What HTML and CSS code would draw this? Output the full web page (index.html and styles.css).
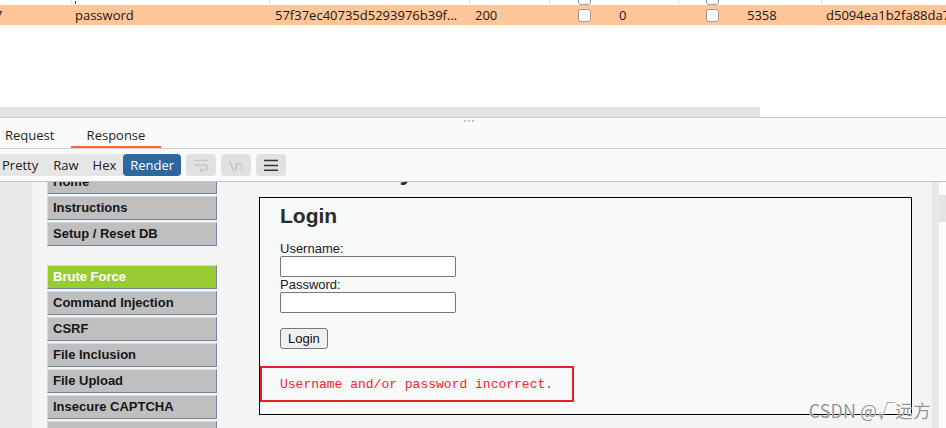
FILE: index.html
```html
<!DOCTYPE html>
<html lang="en">
<head>
<meta charset="utf-8">
<title>Intruder result</title>
<link rel="stylesheet" href="styles.css">
</head>
<body>
<div class="results">
  <div class="row row-top">
    <div class="cell sep"></div>
    <div class="cell sep"><span class="caret"></span></div>
    <div class="cell sep"></div>
    <div class="cell sep"></div>
    <div class="cell chk"><span class="box"></span></div>
    <div class="cell sep"></div>
    <div class="cell chk"><span class="box"></span></div>
    <div class="cell sep"></div>
    <div class="cell"></div>
  </div>
  <div class="row row-sel">
    <div class="cell num">7</div>
    <div class="cell p3">password</div>
    <div class="cell p5">57f37ec40735d5293976b39f...</div>
    <div class="cell p5">200</div>
    <div class="cell chk"><span class="box"></span></div>
    <div class="cell p1">0</div>
    <div class="cell chk"><span class="box"></span></div>
    <div class="cell p2">5358</div>
    <div class="cell p4">d5094ea1b2fa88da75b2b3c4</div>
  </div>
</div>

<div class="gap"></div>
<div class="hbar-wrap"><div class="hbar"></div></div>

<div class="tabs">
  <div class="tab tab-req">Request</div>
  <div class="tab tab-res">Response</div>
  <div class="grip"><i></i><i></i><i></i></div>
</div>

<div class="toolbar">
  <div class="seg">
    <span class="seg-btn">Pretty</span>
    <span class="seg-btn">Raw</span>
    <span class="seg-btn">Hex</span>
    <span class="seg-btn on">Render</span>
  </div>
  <span class="ibtn">
    <svg width="18" height="14" viewBox="0 0 18 14" fill="none" stroke="#c6c6c6" stroke-width="1.3">
      <path d="M2 2.5h14"/>
      <path d="M2 7h11a2.5 2.5 0 0 1 0 5H8"/>
      <path d="M10 10l-2 2 2 2"/>
    </svg>
  </span>
  <span class="ibtn ntext">\n</span>
  <span class="ibtn">
    <svg width="16" height="12" viewBox="0 0 16 12" fill="none" stroke="#333" stroke-width="1.4">
      <path d="M1 1.5h14M1 6.5h14M1 11.2h14"/>
    </svg>
  </span>
</div>

<div class="render">
  <div class="page">
    <div class="page-inner">
      <div class="container">
        <div class="menu">
          <ul class="menu-group">
            <li><a>Home</a></li>
            <li><a>Instructions</a></li>
            <li><a>Setup / Reset DB</a></li>
          </ul>
          <ul class="menu-group">
            <li><a class="sel">Brute Force</a></li>
            <li><a>Command Injection</a></li>
            <li><a>CSRF</a></li>
            <li><a>File Inclusion</a></li>
            <li><a>File Upload</a></li>
            <li><a>Insecure CAPTCHA</a></li>
            <li><a>SQL Injection</a></li>
            <li><a>SQL Injection (Blind)</a></li>
          </ul>
        </div>
        <div class="main">
          <h1>Vulnerability: Brute Force</h1>
          <div class="vuln">
            <div class="form">
              <h2>Login</h2>
              <div class="lbl">Username:</div>
              <div class="inp"></div>
              <div class="lbl">Password:</div>
              <div class="inp"></div>
              <div class="btn">Login</div>
            </div>
            <div class="err"><pre>Username and/or password incorrect.</pre></div>
          </div>
        </div>
      </div>
    </div>
  </div>
  <div class="side"><div class="side-tab"></div></div>
</div>

<div class="watermark">CSDN @√远方</div>
</body>
</html>
```
FILE: styles.css
```css
* { box-sizing: border-box; }
html, body { margin: 0; padding: 0; }
body {
  width: 946px;
  height: 428px;
  overflow: hidden;
  position: relative;
  background: #fff;
  font-family: "Open Sans", "Noto Sans", sans-serif;
  font-size: 13px;
  color: #1c1c1c;
}

/* results table */
.row {
  display: grid;
  grid-template-columns: 72px 198px 200px 80px 68px 61px 66px 77px 124px;
}
.row-top { height: 5px; overflow: hidden; background: #fff; }
.row-top .sep { border-right: 1px solid #e4e4e4; }
.row-top .chk { align-items: flex-end; justify-content: center; }
.row-top .box { margin-top: -11px; }
.caret { display: block; width: 1px; height: 3px; margin-left: 3px; background: #2a4d8a; }
.row-sel { height: 20px; background: #fec598; line-height: 20px; color: #1a1a1a; }
.cell { white-space: nowrap; overflow: hidden; display: flex; align-items: center; }
.num { text-indent: -5px; }
.p1 { padding-left: 1px; }
.p2 { padding-left: 2px; }
.p3 { padding-left: 3px; }
.p4 { padding-left: 4px; }
.p5 { padding-left: 5px; }
.chk { justify-content: center; }
.box {
  display: block;
  width: 13px;
  height: 13px;
  flex: none;
  background: #fff;
  border: 1px solid #9a9a9a;
  border-radius: 3px;
}

.gap { height: 82px; }
.hbar-wrap { height: 11px; border-bottom: 1px solid #c8c8c8; }
.hbar { width: 760px; height: 10px; background: #e4e4e4; }

/* tabs */
.tabs {
  position: relative;
  display: flex;
  height: 31px;
  background: #fafafa;
  border-bottom: 1px solid #d2d2d2;
}
.tab { height: 30px; line-height: 30px; padding-top: 2px; color: #1f1f1f; }
.tab-req { width: 71px; padding-left: 5px; }
.tab-res { width: 90px; text-align: center; border-bottom: 2px solid #ff6633; }
.grip { position: absolute; top: 2px; left: 464px; display: flex; gap: 2px; }
.grip i { display: block; width: 2px; height: 2px; border-radius: 1px; background: #b0b0b0; }

/* toolbar */
.toolbar {
  display: flex;
  align-items: flex-start;
  height: 33px;
  padding-top: 5px;
  background: #fafafa;
  border-bottom: 1px solid #c4c4c4;
}
.seg {
  display: flex;
  margin-left: -5px;
  height: 22px;
  background: #e6e6e6;
  border-radius: 4px;
}
.seg-btn { height: 22px; line-height: 22px; padding: 0 7px; color: #222; }
.seg-btn:nth-child(2) { padding-left: 8px; }
.seg-btn.on { background: #2b68a1; color: #fff; border-radius: 4px; }
.ibtn {
  display: flex;
  align-items: center;
  justify-content: center;
  width: 30px;
  height: 22px;
  margin-left: 5px;
  background: #e1e1e1;
  border-radius: 4px;
}
.ntext { color: #c2c2c2; font-size: 15px; line-height: 22px; }

/* rendered page */
.render { display: flex; height: 246px; }
.page {
  width: 939px;
  height: 246px;
  overflow: hidden;
  background: #e8e8e8;
  font-family: "Liberation Sans", Arial, sans-serif;
  color: #2b2b2b;
}
.page-inner { margin-top: -26px; }
.container {
  display: flex;
  margin-left: 32px;
  width: 900px;
  height: 300px;
  background: #f4f4f4;
}
.menu { width: 170px; margin-left: 15px; margin-top: 14px; }
.menu-group { list-style: none; margin: 0 0 19px; padding: 0; }
.menu-group li { margin-bottom: 2px; }
.menu-group a {
  display: block;
  height: 24px;
  line-height: 22px;
  padding-left: 5px;
  font-weight: bold;
  font-size: 13px;
  color: #161616;
  background: #bfbfbf;
  border: 1px solid;
  border-color: #dadada #7487a0 #7487a0 #dadada;
}
.menu-group a.sel { background: #99cc33; color: #fff; }

.main { width: 653px; margin-left: 42px; }
h1 {
  margin: 0;
  font-size: 26px;
  line-height: 30px;
  font-weight: bold;
  color: #2b2b2b;
}
.vuln {
  margin-top: 11px;
  border: 1px solid #000;
  background: #f7f8f8;
  padding-bottom: 12px;
}
.form { padding: 6px 0 0 20px; }
h2 { margin: 0 0 13px; font-size: 21px; line-height: 24px; font-weight: bold; color: #2b2b2b; }
.lbl { font-size: 13px; line-height: 15px; color: #222; }
.inp {
  width: 176px;
  height: 21px;
  background: #fff;
  border: 1px solid #767676;
  border-radius: 2px;
}
.btn {
  display: inline-block;
  margin-top: 15px;
  height: 21px;
  line-height: 19px;
  padding: 0 7px;
  font-size: 13px;
  color: #111;
  background: #efefef;
  border: 1px solid #767676;
  border-radius: 3px;
}
.err {
  margin-top: 17px;
  width: 314px;
  height: 36px;
  border: 2px solid #e51f2a;
  padding: 9px 0 0 18px;
}
.err pre {
  margin: 0;
  font-family: "Liberation Mono", "Courier New", monospace;
  font-size: 13px;
  line-height: 15px;
  color: #ff2030;
}

.side { width: 7px; background: #fbfbfb; }
.side-tab { margin-top: 13px; height: 27px; background: #e4e4e4; }

.watermark {
  position: absolute;
  right: 15px;
  bottom: 7px;
  font-family: "Noto Sans CJK SC", "Liberation Sans", sans-serif;
  font-size: 18px;
  line-height: 22px;
  color: rgba(110, 110, 110, 0.75);
  text-shadow: 0 0 1px #fff, 0 0 1px #fff;
}
```
